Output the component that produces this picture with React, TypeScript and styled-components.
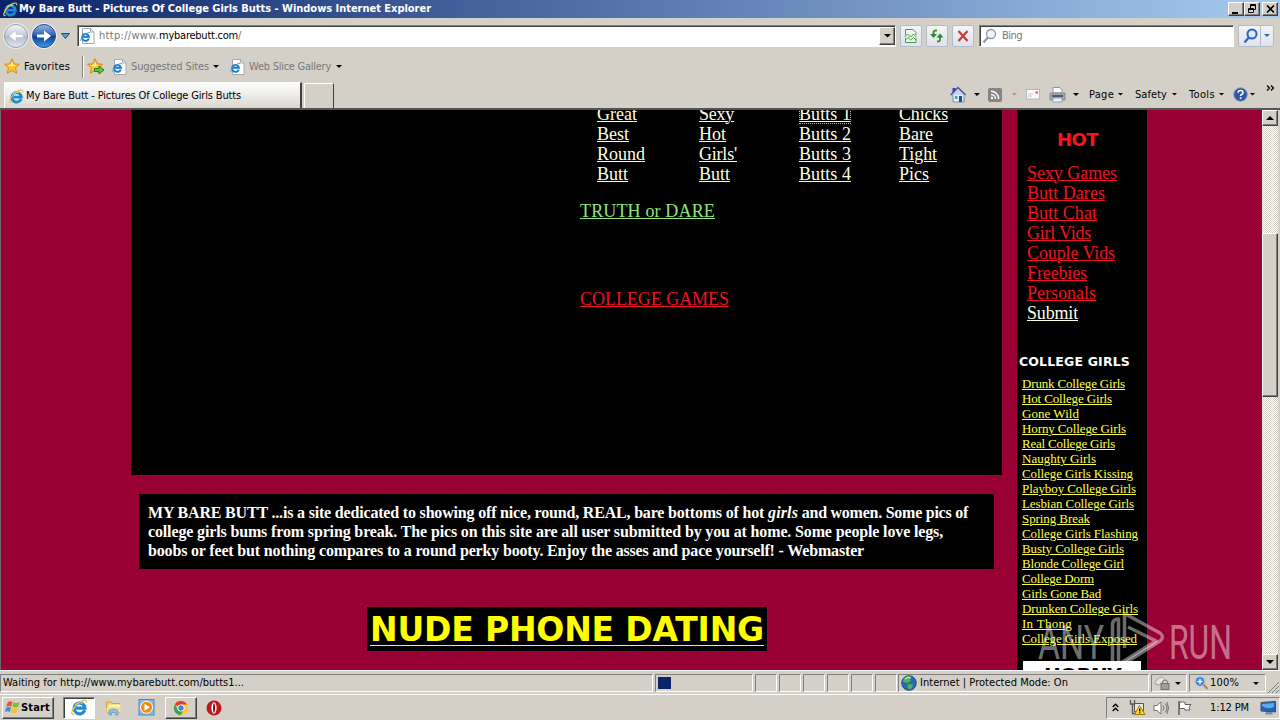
import React, { useLayoutEffect, useRef, useState } from "react";
import styled, { createGlobalStyle, css } from "styled-components";

const ui = `"DejaVu Sans Condensed", "DejaVu Sans", sans-serif`;
const serif = `"Liberation Serif", serif`;
const verdana = `"DejaVu Sans", sans-serif`;

const GlobalStyle = createGlobalStyle`
  * { box-sizing: border-box; }
  body {
    margin: 0;
    overflow: hidden;
    background: #d4d0c8;
  }
  svg { display: block; flex: none; }
`;

/* ---------- text that keeps a set width whatever the font ---------- */

interface LabelProps {
  width: number;
  children: string;
  className?: string;
}

const LabelBox = styled.span`
  display: inline-block;
  white-space: pre;
  flex: none;
`;

const Label = ({ width, children, className }: LabelProps) => {
  const ref = useRef<HTMLSpanElement>(null);
  const [spacing, setSpacing] = useState(0);

  useLayoutEffect(() => {
    if (ref.current) {
      const natural = ref.current.getBoundingClientRect().width;
      setSpacing((width - natural) / children.length);
    }
  }, [width, children]);

  return (
    <LabelBox ref={ref} className={className} style={{ letterSpacing: spacing }}>
      {children}
    </LabelBox>
  );
};

/* ---------- window chrome ---------- */

const Window = styled.div`
  width: 1280px;
  height: 720px;
  display: flex;
  flex-direction: column;
  overflow: hidden;
  position: relative;
  background: #d4d0c8;
  color: #000;
  font-family: ${ui};
  font-size: 11px;
  line-height: 14px;
`;

const raised = css`
  background: #d4d0c8;
  border: 1px solid;
  border-color: #fff #404040 #404040 #fff;
  box-shadow: inset -1px -1px 0 #808080;
`;

const sunken = css`
  border: 1px solid;
  border-color: #808080 #fff #fff #808080;
`;

const Slot = styled.div<{ $ml?: number; $mt?: number }>`
  display: flex;
  flex: none;
  margin-left: ${(props) => props.$ml ?? 0}px;
  margin-top: ${(props) => props.$mt ?? 0}px;
`;

const TitleBar = styled.div`
  display: flex;
  align-items: center;
  height: 18px;
  flex: none;
  padding: 0 2px 0 3px;
  color: #fff;
  font-weight: bold;
  background: linear-gradient(to right, #0a246a, #a6caf0);
`;

const WindowButton = styled.div<{ $ml?: number }>`
  ${raised}
  width: 16px;
  height: 14px;
  margin-left: ${(props) => props.$ml ?? 0}px;
  display: flex;
  align-items: center;
  justify-content: center;
`;

const Fill = styled.div`
  flex: 1;
`;

const NavBar = styled.div`
  display: flex;
  align-items: center;
  height: 35px;
  flex: none;
  padding-left: 2px;
`;

const Field = styled.div<{ $w: number; $ml: number }>`
  display: flex;
  align-items: center;
  width: ${(props) => props.$w}px;
  height: 22px;
  margin-left: ${(props) => props.$ml}px;
  background: #fff;
  border: 1px solid;
  border-color: #808080 #fff #fff #808080;
  box-shadow: inset 1px 1px 0 #404040;
  color: #777;
  padding-left: 2px;
  flex: none;
`;

const Host = styled(Label)`
  color: #000;
`;

const DropButton = styled.div`
  ${raised}
  width: 16px;
  height: 18px;
  margin: 1px 0 0;
  display: flex;
  align-items: center;
  justify-content: center;
`;

const ToolButton = styled.div<{ $ml: number; $w?: number }>`
  width: ${(props) => props.$w ?? 22}px;
  height: 22px;
  margin-left: ${(props) => props.$ml}px;
  border: 1px solid #b4bccb;
  border-radius: 2px;
  background: linear-gradient(#f3f4f6, #dfe3ea);
  display: flex;
  align-items: center;
  justify-content: center;
  flex: none;
`;

const SplitLine = styled.div`
  width: 1px;
  height: 20px;
  background: #b4bccb;
  margin: 0 3px 0 2px;
`;

const FavoritesBar = styled.div`
  display: flex;
  align-items: center;
  height: 27px;
  flex: none;
  padding-left: 4px;
`;

const Muted = styled(Label)`
  color: #777;
`;

const Etch = styled.div`
  width: 2px;
  height: 22px;
  margin-left: 12px;
  border-left: 1px solid #808080;
  border-right: 1px solid #fff;
`;

const TabBar = styled.div`
  display: flex;
  align-items: flex-start;
  height: 30px;
  flex: none;
  padding-left: 4px;
  border-bottom: 2px solid #55534f;
`;

const Tab = styled.div`
  display: flex;
  align-items: center;
  width: 298px;
  height: 26px;
  margin-top: 2px;
  padding: 1px 0 0 4px;
  border: 1px solid #fff;
  border-right: 2px solid #404040;
  border-bottom: 0;
  background: linear-gradient(#fff, #d9d6cf);
`;

const NewTab = styled.div`
  width: 30px;
  height: 25px;
  margin: 3px 0 0 2px;
  border: 1px solid #fff;
  border-right: 1px solid #404040;
  border-bottom: 0;
`;

const Commands = styled.div`
  display: flex;
  align-items: center;
  height: 29px;
  flex: 1;
  padding-left: 616px;
`;

const Chevrons = styled.svg`
  margin: -13px 0 0 11px;
`;

/* ---------- web page ---------- */

const Viewport = styled.div`
  display: flex;
  height: 560px;
  flex: none;
  overflow: hidden;
  background: #990033;
  border-left: 1px solid #6b6862;
`;

const Main = styled.div`
  width: 871px;
  margin-left: 130px;
  flex: none;
`;

const Panel = styled.div`
  height: 365px;
  background: #000;
  overflow: hidden;
  font-family: ${serif};
  font-size: 18px;
  line-height: 20px;
`;

const LinkGrid = styled.div`
  display: grid;
  grid-template-columns: 102px 100px 100px 100px;
  margin: -6px 0 0 466px;
`;

const underlined = css`
  text-decoration: underline;
  text-decoration-thickness: 1px;
  text-underline-offset: 1px;
`;

const Link = styled(Label)<{ $color?: string; $focus?: boolean }>`
  ${underlined}
  justify-self: start;
  color: ${(props) => props.$color ?? "#ffffe0"};
  ${(props) => props.$focus && "outline: 1px dotted #bbb; outline-offset: -1px;"}
`;

const SoloLink = styled.div<{ $mt: number }>`
  height: 20px;
  margin: ${(props) => props.$mt}px 0 0 449px;
`;

const Intro = styled.div`
  display: flex;
  flex-direction: column;
  align-items: flex-start;
  margin: 19px 8px 0;
  height: 75px;
  padding: 9px 9px 0;
  background: #000;
  color: #fff;
  font-family: ${serif};
  font-size: 16px;
  font-weight: bold;
  line-height: 19px;
`;

const IntroLine = styled.div`
  display: flex;
`;

const Italic = styled(Label)`
  font-style: italic;
`;

const Banner = styled.div`
  width: 400px;
  height: 44px;
  margin: 38px 0 0 236px;
  padding: 3px 0 0 3px;
  background: #000;
  font-family: ${verdana};
  font-size: 33px;
  font-weight: bold;
  line-height: 39px;
`;

const BannerLink = styled(Label)`
  color: #ff0;
  text-decoration: underline;
  text-decoration-thickness: 1px;
  text-decoration-skip-ink: none;
  text-underline-offset: 4px;
`;

const Sidebar = styled.div`
  width: 130px;
  margin-left: 15px;
  height: 560px;
  overflow: hidden;
  background: #000;
  display: flex;
  flex-direction: column;
  align-items: flex-start;
  flex: none;
  font-family: ${serif};
`;

const HotTitle = styled(Label)`
  margin: 18px 0 0 40px;
  font: bold 18px/24px ${verdana};
  color: #f81420;
`;

const HotList = styled.div`
  display: flex;
  flex-direction: column;
  align-items: flex-start;
  margin: 11px 0 0 10px;
  font-size: 18px;
  line-height: 20px;
`;

const CollegeTitle = styled(Label)`
  margin: 31px 0 0 2px;
  font: bold 12.5px/16px ${verdana};
  color: #fff;
`;

const CollegeList = styled.div`
  display: flex;
  flex-direction: column;
  align-items: flex-start;
  margin: 6px 0 0 5px;
  font-size: 13px;
  line-height: 15px;
`;

const SmallLink = styled(Label)`
  text-decoration: underline;
  text-decoration-thickness: 1px;
  text-underline-offset: 1px;
  color: #ffff4a;
`;

const Ad = styled.div`
  width: 118px;
  height: 40px;
  margin: 15px 0 0 6px;
  padding: 3px 0 0 21px;
  flex: none;
  background: #fff;
  color: #000;
  font: bold 20px/22px ${verdana};
`;

const Scrollbar = styled.div`
  display: flex;
  flex-direction: column;
  width: 16px;
  height: 560px;
  margin-left: auto;
  margin-right: 2px;
  flex: none;
  background: repeating-conic-gradient(#fff 0 25%, #d4d0c8 0 50%) 0 0 / 2px 2px;
`;

const ScrollGutter = styled.div`
  width: 2px;
  margin-left: -2px;
  background: #d4d0c8;
`;

const ScrollButton = styled.div`
  ${raised}
  height: 16px;
  flex: none;
  display: flex;
  align-items: center;
  justify-content: center;
`;

const Thumb = styled.div`
  ${raised}
  height: 164px;
  margin: 107px 0 auto;
`;

const Watermark = styled.svg`
  position: absolute;
  left: 1036px;
  top: 610px;
`;

/* ---------- status bar and taskbar ---------- */

const StatusBar = styled.div`
  display: flex;
  height: 24px;
  flex: none;
  padding-top: 3px;
  border-top: 1px solid #fff;
`;

const Cell = styled.div<{ $w: number; $ml?: number }>`
  ${sunken}
  display: flex;
  align-items: center;
  width: ${(props) => props.$w}px;
  height: 18px;
  margin-left: ${(props) => props.$ml ?? 2}px;
  padding-left: 2px;
  flex: none;
`;

const Progress = styled.div`
  width: 13px;
  height: 12px;
  background: #0a246a;
`;

const Taskbar = styled.div`
  display: flex;
  align-items: center;
  height: 26px;
  flex: none;
  border-top: 1px solid #fff;
`;

const StartButton = styled.div`
  ${raised}
  display: flex;
  align-items: center;
  width: 52px;
  height: 22px;
  margin-left: 2px;
  padding-left: 2px;
  font-weight: bold;
`;

const TaskButton = styled.div<{ $active?: boolean; $ml: number }>`
  ${(props) => (props.$active ? sunken : raised)}
  ${(props) => props.$active && "background: #fff; box-shadow: inset 1px 1px 0 #404040;"}
  width: 32px;
  height: 22px;
  margin-left: ${(props) => props.$ml}px;
  display: flex;
  align-items: center;
  justify-content: center;
`;

const Tray = styled.div`
  ${sunken}
  display: flex;
  align-items: center;
  width: 174px;
  height: 22px;
  margin-left: auto;
  padding-left: 5px;
`;

/* ---------- icons ---------- */

const IeLogo = ({ size = 15 }: { size?: number }) => (
  <svg width={size} height={size} viewBox="0 0 16 16" fill="none">
    <path d="M12.900 10.600A5.100 5.100 0 1 1 13.200 8.600H4.800" stroke="#1c8bd6" strokeWidth="3" />
    <path d="M4 5.800A5 5 0 0 1 11 4.300" stroke="#7fd8f8" strokeWidth="1.300" />
    <path d="M2.800 14.400C-.8 15.600.8 9.600 5.400 5.200S14.800-.6 14.700 3.500" stroke="#f0c040" strokeWidth="1.300" />
  </svg>
);

const PageIcon = () => (
  <svg width="15" height="16" viewBox="0 0 15 16" fill="none">
    <path d="M2.500.5h8l3.500 3.500v11.500h-11.500z" fill="#fff" stroke="#a3aab5" />
    <path d="M10.500.500v3.500H14" stroke="#a3aab5" />
    <path d="M8.800 10.700A3.500 3.500 0 1 1 9 8.800H3" stroke="#1778c8" strokeWidth="1.900" />
    <path d="M1 13c-1.500-1.500 4-8.500 9-8.700" stroke="#3ea2dc" />
  </svg>
);

const Caret = ({ color = "#000", size = 6 }: { color?: string; size?: number }) => (
  <svg width={size} height={size / 2} viewBox="0 0 6 3">
    <path d="M0 0h6L3 3z" fill={color} />
  </svg>
);

const Round = ({ active }: { active?: boolean }) => (
  <svg width="28" height="28" viewBox="0 0 28 28">
    <defs>
      <linearGradient id={active ? "goOn" : "goOff"} x2="0" y2="1">
        <stop offset="0" stopColor={active ? "#9db9e2" : "#f4f5f8"} />
        <stop offset=".48" stopColor={active ? "#2a5db5" : "#c4cad6"} />
        <stop offset=".52" stopColor={active ? "#0e3c91" : "#b2bac9"} />
        <stop offset="1" stopColor={active ? "#3aa0ee" : "#e6e9ef"} />
      </linearGradient>
    </defs>
    <circle cx="14" cy="14" r="13" fill="#edeef0" />
    <circle cx="14" cy="14" r="11.500" fill={active ? "url(#goOn)" : "url(#goOff)"} stroke={active ? "#28478a" : "#8f98a8"} />
    <path
      d={active ? "M7 12.500h7V8.500l7 5.500-7 5.500v-4H7z" : "M21 12.500h-7V8.500L7 14l7 5.500v-4h7z"}
      fill="#fff"
      stroke={active ? "none" : "#c5cad3"}
      strokeWidth=".6"
    />
  </svg>
);

const StarIcon = ({ add }: { add?: boolean }) => (
  <svg width="18" height="17" viewBox="0 0 18 17">
    <path d="M8 .8l2.200 5 5.300.500-4 3.600 1.200 5.400L8 12.500l-4.700 2.800 1.200-5.400-4-3.600 5.300-.5z" fill="#fcc52d" stroke="#d68b12" />
    <path d="M8 3.500l1.200 3.300 3 .4-5 1.300-3.700-1.300 3.200-.4z" fill="#fff0a0" />
    {add && <path d="M7.500 10.500h4.500V8l5 4-5 4v-2.500H7.500z" fill="#5dc83f" stroke="#26851b" />}
  </svg>
);

const MagnifierIcon = ({ color, flip }: { color: string; flip?: boolean }) => (
  <svg width="15" height="16" viewBox="0 0 15 16" fill="none">
    <circle cx="9" cy="6" r="4.500" fill={flip ? "#dcebff" : "#eef5fa"} stroke={color} strokeWidth={flip ? 2 : 1.300} />
    <path d="M5.800 9.500L1.500 14.500" stroke={color} strokeWidth="2.200" />
  </svg>
);

const BrokenPageIcon = () => (
  <svg width="14" height="16" viewBox="0 0 14 16" fill="none">
    <path d="M1.500 7V1.500h7.500l3 3V7M1.500 10v4.500H12V10" fill="#eef8ea" stroke="#4d9a4c" />
    <path d="M.5 9l3-3 3 3 3-3 3 3M1.500 12l2.500-2.500 2.700 2.500 2.800-2.500L12 12" stroke="#4d9a4c" />
  </svg>
);

const RefreshIcon = () => (
  <svg width="16" height="14" viewBox="0 0 16 14" fill="none">
    <path d="M8 1.500H6.500Q4.500 1.500 4.500 4v2" stroke="#3f9440" strokeWidth="2" />
    <path d="M1 5h7L4.500 9z" fill="#2e8b31" />
    <path d="M8 12.500h1q2 0 2-2.500V8" stroke="#3f9440" strokeWidth="2" />
    <path d="M7.500 8.500h7L11 4.500z" fill="#2e8b31" />
  </svg>
);

const StopIcon = () => (
  <svg width="12" height="12" viewBox="0 0 12 12">
    <path d="M1.500 1l9 10M10.500 1l-9 10" stroke="#cc3a3a" strokeWidth="2.200" />
  </svg>
);

const HomeIcon = () => (
  <svg width="17" height="17" viewBox="0 0 17 17">
    <path d="M3 8h11v8H3z" fill="#e4edf7" stroke="#7c8fae" />
    <path d="M2.500 2h3v5h-3z" fill="#4b3f9c" />
    <path d="M.8 9L8 1.500 15.500 9" fill="#c7d4ea" stroke="#3857a4" strokeWidth="1.500" />
    <path d="M9 10h3v6H9z" fill="#234f91" />
    <path d="M5 10h2.500v3H5z" fill="#3ca1dd" />
  </svg>
);

const RssIcon = () => (
  <svg width="14" height="14" viewBox="0 0 14 14" fill="none">
    <rect width="14" height="14" rx="2" fill="#858585" />
    <path d="M3 6.500A4.500 4.500 0 0 1 7.500 11M3 3.300A7.700 7.700 0 0 1 10.700 11" stroke="#fff" strokeWidth="1.500" />
    <circle cx="4" cy="10" r="1.200" fill="#fff" />
  </svg>
);

const MailIcon = () => (
  <svg width="14" height="11" viewBox="0 0 14 11" fill="none">
    <rect x=".5" y=".5" width="13" height="9.500" fill="#fafafa" stroke="#b8b8c0" />
    <path d="M2 5h5M2 7h4" stroke="#c8c8d4" />
    <path d="M9.500 2.500h2.500v2H9.500z" fill="#d6505c" />
  </svg>
);

const PrinterIcon = () => (
  <svg width="17" height="16" viewBox="0 0 17 16">
    <path d="M4 6V.5h7L13 3v3z" fill="#fff" stroke="#8c939c" />
    <path d="M1 6h15v7H1z" fill="#a3a6aa" stroke="#888c92" />
    <path d="M3 8h11v2H3z" fill="#54585e" />
    <path d="M4 11h9v4H4z" fill="#e7f3fc" stroke="#7ba6c4" />
  </svg>
);

const HelpIcon = () => (
  <svg width="15" height="15" viewBox="0 0 15 15">
    <circle cx="7.500" cy="7.500" r="6.800" fill="#2c55b0" stroke="#8b9bbd" />
    <path d="M5 5.600Q5.200 3.500 7.600 3.500T10 5.700Q10 7 8.500 7.600 7.600 8 7.600 9M7.600 10.300v1.700" fill="none" stroke="#fff" strokeWidth="1.600" />
  </svg>
);

const GlobeIcon = () => (
  <svg width="16" height="16" viewBox="0 0 16 16">
    <circle cx="8" cy="8" r="7.300" fill="#2868b4" stroke="#234f7d" />
    <path d="M3 3q4-3 7-1.500L8.500 4 10 6 6 8 2 7zM7 9l5 .5-1.500 4L8 14.500 6.500 12z" fill="#56b552" />
    <path d="M4 4q3-2.500 6-1" stroke="#d6f3ff" fill="none" />
  </svg>
);

const LockIcon = () => (
  <svg width="17" height="16" viewBox="0 0 17 16">
    <path d="M1 9q1-6 7-7l3 3q-4 2-5 5z" fill="#e4e4e4" stroke="#a3a3a3" />
    <path d="M8.500 9V7q0-2 2.500-2t2.500 2v2" fill="none" stroke="#777" />
    <rect x="7" y="8.500" width="8" height="6" fill="#9e9e9e" stroke="#737373" />
  </svg>
);

const ZoomIcon = () => (
  <svg width="15" height="15" viewBox="0 0 15 15">
    <path d="M9 8l4.500 5" stroke="#b98850" strokeWidth="2.300" />
    <circle cx="6" cy="5.500" r="4.700" fill="#3c86d8" stroke="#a9c4e4" />
    <path d="M3.500 5.500h5M6 3v5" stroke="#fff" strokeWidth="1.400" />
  </svg>
);

const WindowsFlag = () => (
  <svg width="16" height="15" viewBox="0 0 16 15">
    <path d="M2.500 2.500q2.500-2 5-.5L6.300 6.500Q4 5.300 1.200 7z" fill="#e9562b" />
    <path d="M8.500 2.200q3 1.500 6-.2l-1.300 4.700q-2.800 1.500-5.800 0z" fill="#82bc34" />
    <path d="M1 8q2.500-1.600 5-.4L4.800 12q-2.500-1.500-5 .2z" fill="#3c8ed8" />
    <path d="M7.200 8q2.800 1.300 5.700-.2l-1.300 4.500q-2.800 1.700-5.700 0z" fill="#f5c327" />
  </svg>
);

const FolderIcon = () => (
  <svg width="17" height="17" viewBox="0 0 17 17">
    <path d="M1.500 3h5l1 1.500h7V13h-13z" fill="#efcf69" stroke="#caa443" />
    <path d="M3.500 5.500h11.500V11H3.500z" fill="#fff3b5" />
    <path d="M1.500 8h14v5h-14z" fill="#f7df86" />
    <path d="M4 16v-4q0-2 4.500-2t4.500 2v4h-2.500v-2.500h-4V16z" fill="#82c4e9" stroke="#549abf" strokeWidth=".7" />
  </svg>
);

const PlayerIcon = () => (
  <svg width="17" height="17" viewBox="0 0 17 17">
    <rect x="1" y=".5" width="15" height="15.500" fill="#87bbe4" stroke="#4c88bd" />
    <circle cx="8.500" cy="8.300" r="6" fill="#f18a16" stroke="#fff" />
    <path d="M6.500 4.800v7l5.500-3.500z" fill="#fff" />
  </svg>
);

const ChromeIcon = () => (
  <svg width="16" height="16" viewBox="0 0 16 16">
    <circle cx="8" cy="8" r="7.200" fill="#f4cb31" />
    <path d="M8 8L1.800 4.400A7.200 7.200 0 0 1 14.200 4.600H8z" fill="#df3e30" />
    <path d="M1.800 4.400A7.200 7.200 0 0 0 7.500 15.200L11 9.500 5 9.700z" fill="#3ba251" />
    <circle cx="8" cy="8" r="3.600" fill="#fff" />
    <circle cx="8" cy="8" r="2.700" fill="#4280dd" />
  </svg>
);

const OperaIcon = () => (
  <svg width="16" height="16" viewBox="0 0 16 16">
    <circle cx="8" cy="8" r="7.500" fill="#bf171d" />
    <ellipse cx="8" cy="8" rx="2.600" ry="5.700" fill="#fff" />
    <ellipse cx="8" cy="8" rx="1" ry="4.800" fill="#8c0e13" />
  </svg>
);

const TrayUp = () => (
  <svg width="7" height="9" viewBox="0 0 7 9" fill="none" stroke="#000" strokeWidth="1.400">
    <path d="M.7 4l2.800-2.800L6.300 4M.7 8l2.800-2.800L6.300 8" />
  </svg>
);

const NetworkIcon = () => (
  <svg width="17" height="17" viewBox="0 0 17 17">
    <path d="M5.500 4.500h9v8h-9z" fill="#e7e7e7" stroke="#555" />
    <path d="M1.500 1v4h4V1M3.500 5v9.500H9" fill="none" stroke="#555" strokeWidth="1.300" />
    <path d="M10.500 6.500L16 15.500H5.500z" fill="#ffd42b" stroke="#a17a06" />
    <path d="M10.700 9.500v3M10.700 13.300v1" stroke="#000" strokeWidth="1.300" />
  </svg>
);

const SpeakerIcon = () => (
  <svg width="17" height="16" viewBox="0 0 17 16" fill="none" stroke="#707070">
    <path d="M1 5.500h3L8 2v12l-4-3.500H1z" fill="#fff" />
    <path d="M10 5.500q2 2.500 0 5M12 3.500q4 4.500 0 9M14 2q3 6 0 12" />
  </svg>
);

const FlagIcon = () => (
  <svg width="16" height="16" viewBox="0 0 16 16">
    <path d="M2.500 2.500q3-1.500 5.500 0v2h6l-2 3 1 2.500H8l-.5-1.500h-5z" fill="#fff" stroke="#606060" />
    <path d="M2 1v14" stroke="#606060" strokeWidth="1.500" />
  </svg>
);

const MonitorIcon = () => (
  <svg width="17" height="14" viewBox="0 0 17 14">
    <path d="M1 1.500L15.500.500V11L1 10z" fill="#1c66bd" stroke="#39516f" />
    <path d="M2 3l12-1v4Q8 9 2 5z" fill="#5ba7e9" />
    <path d="M6 11h6l1 2.500H5z" fill="#7d8f9c" />
  </svg>
);

/* ---------- data ---------- */

const gridLinks: [string, number][] = [
  ["Great", 40], ["Sexy", 35], ["Butts 1", 52], ["Chicks", 49],
  ["Best", 32], ["Hot", 27], ["Butts 2", 52], ["Bare", 34],
  ["Round", 48], ["Girls'", 38], ["Butts 3", 52], ["Tight", 38],
  ["Butt", 31], ["Butt", 31], ["Butts 4", 52], ["Pics", 30],
];

const hotLinks: [string, number][] = [
  ["Sexy Games", 90],
  ["Butt Dares", 78],
  ["Butt Chat", 70],
  ["Girl Vids", 64],
  ["Couple Vids", 88],
  ["Freebies", 60],
  ["Personals", 69],
];

const collegeLinks: [string, number][] = [
  ["Drunk College Girls", 103],
  ["Hot College Girls", 90],
  ["Gone Wild", 57],
  ["Horny College Girls", 104],
  ["Real College Girls", 93],
  ["Naughty Girls", 74],
  ["College Girls Kissing", 111],
  ["Playboy College Girls", 114],
  ["Lesbian College Girls", 112],
  ["Spring Break", 68],
  ["College Girls Flashing", 116],
  ["Busty College Girls", 102],
  ["Blonde College Girl", 102],
  ["College Dorm", 72],
  ["Girls Gone Bad", 79],
  ["Drunken College Girls", 116],
  ["In Thong", 50],
  ["College Girls Exposed", 115],
];

const App = () => (
  <Window>
    <GlobalStyle />
    <TitleBar>
      <IeLogo />
      <Slot $ml={1}>
        <Label width={412}>My Bare Butt - Pictures Of College Girls Butts - Windows Internet Explorer</Label>
      </Slot>
      <Fill />
      <WindowButton>
        <svg width="10" height="9"><path d="M1 7h6v2H1z" /></svg>
      </WindowButton>
      <WindowButton>
        <svg width="10" height="10" fill="none" stroke="#000">
          <path d="M3.500 4V.500h5v5H7M3 1.500h6" />
          <path d="M1.500 4.500h5v4h-5zM1 5.500h6" />
        </svg>
      </WindowButton>
      <WindowButton $ml={2}>
        <svg width="9" height="8"><path d="M1 .5l7 7M8 .5l-7 7" stroke="#000" strokeWidth="1.600" /></svg>
      </WindowButton>
    </TitleBar>

    <NavBar>
      <Round />
      <Round active />
      <Slot $ml={3}>
        <svg width="9" height="6"><path d="M.5.500h8l-4 5z" fill="#5f9bd0" stroke="#1f4a82" /></svg>
      </Slot>
      <Field $w={819} $ml={7}>
        <PageIcon />
        <Slot $ml={4}>
          <Label width={60}>http://www.</Label>
          <Host width={79}>mybarebutt.com</Host>
          <Label width={4}>/</Label>
        </Slot>
        <Fill />
        <DropButton><Caret size={7} /></DropButton>
      </Field>
      <ToolButton $ml={4}><BrokenPageIcon /></ToolButton>
      <ToolButton $ml={4}><RefreshIcon /></ToolButton>
      <ToolButton $ml={4}><StopIcon /></ToolButton>
      <Field $w={255} $ml={5}>
        <MagnifierIcon color="#8c9aa6" />
        <Slot $ml={5}><Label width={20}>Bing</Label></Slot>
      </Field>
      <ToolButton $ml={4} $w={36}>
        <MagnifierIcon color="#2a61c4" flip />
        <SplitLine />
        <Caret color="#2f67a8" />
      </ToolButton>
    </NavBar>

    <FavoritesBar>
      <StarIcon />
      <Slot $ml={2}><Label width={46}>Favorites</Label></Slot>
      <Etch />
      <Slot $ml={3}><StarIcon add /></Slot>
      <Slot $ml={7}><PageIcon /></Slot>
      <Slot $ml={4}><Muted width={78}>Suggested Sites</Muted></Slot>
      <Slot $ml={4}><Caret /></Slot>
      <Slot $ml={11}><PageIcon /></Slot>
      <Slot $ml={4}><Muted width={82}>Web Slice Gallery</Muted></Slot>
      <Slot $ml={5}><Caret /></Slot>
    </FavoritesBar>

    <TabBar>
      <Tab>
        <IeLogo />
        <Slot $ml={2}><Label width={215}>My Bare Butt - Pictures Of College Girls Butts</Label></Slot>
      </Tab>
      <NewTab />
      <Commands>
        <HomeIcon />
        <Slot $ml={7}><Caret /></Slot>
        <Slot $ml={8}><RssIcon /></Slot>
        <Slot $ml={10}><Caret color="#999" size={5} /></Slot>
        <Slot $ml={9}><MailIcon /></Slot>
        <Slot $ml={9}><PrinterIcon /></Slot>
        <Slot $ml={7}><Caret /></Slot>
        <Slot $ml={10}><Label width={25}>Page</Label></Slot>
        <Slot $ml={4}><Caret size={5} /></Slot>
        <Slot $ml={12}><Label width={32}>Safety</Label></Slot>
        <Slot $ml={5}><Caret size={5} /></Slot>
        <Slot $ml={12}><Label width={26}>Tools</Label></Slot>
        <Slot $ml={4}><Caret size={5} /></Slot>
        <Slot $ml={9}><HelpIcon /></Slot>
        <Slot $ml={2}><Caret size={5} /></Slot>
        <Chevrons width="9" height="6" fill="none" stroke="#000" strokeWidth="1.300">
          <path d="M1 .5L3.500 3 1 5.500M5 .5L7.500 3 5 5.500" />
        </Chevrons>
      </Commands>
    </TabBar>

    <Viewport>
      <Main>
        <Panel>
          <LinkGrid>
            {gridLinks.map(([text, width], i) => (
              <Link key={i} width={width} $focus={text === "Butts 1"}>{text}</Link>
            ))}
          </LinkGrid>
          <SoloLink $mt={17}><Link width={135} $color="#8ee67a">TRUTH or DARE</Link></SoloLink>
          <SoloLink $mt={68}><Link width={149} $color="#ee1420">COLLEGE GAMES</Link></SoloLink>
        </Panel>
        <Intro>
          <IntroLine>
            <Label width={620}>MY BARE BUTT ...is a site dedicated to showing off nice, round, REAL, bare bottoms of hot </Label>
            <Italic width={30}>girls</Italic>
            <Label width={170}> and women. Some pics of</Label>
          </IntroLine>
          <Label width={795}>college girls bums from spring break. The pics on this site are all user submitted by you at home. Some people love legs,</Label>
          <Label width={716}>boobs or feet but nothing compares to a round perky booty. Enjoy the asses and pace yourself! - Webmaster</Label>
        </Intro>
        <Banner>
          <BannerLink width={394}>NUDE PHONE DATING</BannerLink>
        </Banner>
      </Main>
      <Sidebar>
        <HotTitle width={41}>HOT</HotTitle>
        <HotList>
          {hotLinks.map(([text, width]) => (
            <Link key={text} width={width} $color="#ee1420">{text}</Link>
          ))}
          <Link width={51}>Submit</Link>
        </HotList>
        <CollegeTitle width={111}>COLLEGE GIRLS</CollegeTitle>
        <CollegeList>
          {collegeLinks.map(([text, width]) => (
            <SmallLink key={text} width={width}>{text}</SmallLink>
          ))}
        </CollegeList>
        <Ad><Label width={77}>HORNY</Label></Ad>
      </Sidebar>
      <Scrollbar>
        <ScrollButton><svg width="8" height="4"><path d="M0 4l4-4 4 4z" /></svg></ScrollButton>
        <Thumb />
        <ScrollButton><svg width="8" height="4"><path d="M0 0h8L4 4z" /></svg></ScrollButton>
      </Scrollbar>
      <ScrollGutter />
    </Viewport>

    <StatusBar>
      <Cell $w={653} $ml={0}><Label width={241}>Waiting for http://www.mybarebutt.com/butts1...</Label></Cell>
      <Cell $w={98}><Progress /></Cell>
      {[0, 1, 2, 3, 4].map((i) => (
        <Cell key={i} $w={22} />
      ))}
      <Cell $w={22} />
      <Cell $w={251} $ml={1}>
        <GlobeIcon />
        <Slot $ml={3}><Label width={148}>Internet | Protected Mode: On</Label></Slot>
      </Cell>
      <Cell $w={36}>
        <LockIcon />
        <Slot $ml={4}><Caret /></Slot>
      </Cell>
      <Cell $w={77}>
        <Slot $ml={2}><ZoomIcon /></Slot>
        <Slot $ml={1}><Label width={29}>100%</Label></Slot>
        <Slot $ml={14}><Caret /></Slot>
      </Cell>
      <Slot $mt={7} $ml={1}>
        <svg width="12" height="12" stroke="#808080"><path d="M1 12L12 1M5 12l7-7M9 12l3-3" /></svg>
      </Slot>
    </StatusBar>

    <Taskbar>
      <StartButton>
        <WindowsFlag />
        <Label width={29}>Start</Label>
      </StartButton>
      <TaskButton $active $ml={9}><IeLogo size={17} /></TaskButton>
      <Slot $ml={10}><FolderIcon /></Slot>
      <Slot $ml={16}><PlayerIcon /></Slot>
      <TaskButton $ml={10}><ChromeIcon /></TaskButton>
      <Slot $ml={9}><OperaIcon /></Slot>
      <Tray>
        <TrayUp />
        <Slot $ml={10}><NetworkIcon /></Slot>
        <Slot $ml={7}><SpeakerIcon /></Slot>
        <Slot $ml={7}><FlagIcon /></Slot>
        <Slot $ml={17}><Label width={39}>1:12 PM</Label></Slot>
        <Slot $ml={11}><MonitorIcon /></Slot>
      </Tray>
    </Taskbar>

    <Watermark width="198" height="60" viewBox="0 0 198 60" fill="#fff" fillOpacity=".45">
      <text x="2" y="49" fontFamily="Roboto" fontSize="48" textLength="66" lengthAdjust="spacingAndGlyphs">ANY</text>
      <text x="133" y="49" fontFamily="Roboto" fontSize="48" textLength="63" lengthAdjust="spacingAndGlyphs">RUN</text>
      <g fill="none" stroke="#fff" strokeOpacity=".42" strokeWidth="3.500" strokeLinejoin="round">
        <path d="M76.500 60V15q0-6 6-6v42" />
        <path d="M88.500 38V3.500L124 23q5 4 0 8L86 55" />
        <path d="M92 17l28 14-40 25" />
      </g>
    </Watermark>
  </Window>
);

export default App;
